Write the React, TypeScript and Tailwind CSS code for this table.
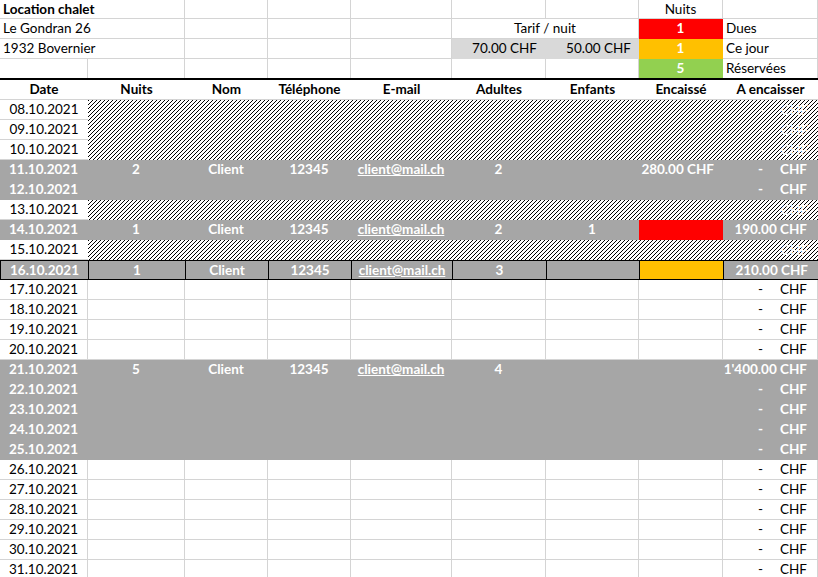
import React from "react";

type Kind = "hatch" | "gray" | "white";

interface DayRow {
  d: string;
  kind: Kind;
  booking?: { n: string; a: string; e?: string };
  enc?: string;
  pay?: string;
  boxed?: boolean;
}

const W = ["w-[88px]", "w-[97px]", "w-[83px]", "w-[83px]", "w-[101px]", "w-[94px]", "w-[93px]", "w-[84px]", "w-[95px]"];

const days: DayRow[] = [
  { d: "08.10.2021", kind: "hatch" },
  { d: "09.10.2021", kind: "hatch" },
  { d: "10.10.2021", kind: "hatch" },
  { d: "11.10.2021", kind: "gray", booking: { n: "2", a: "2" }, enc: "280.00", pay: "-" },
  { d: "12.10.2021", kind: "gray", pay: "-" },
  { d: "13.10.2021", kind: "hatch" },
  { d: "14.10.2021", kind: "gray", booking: { n: "1", a: "2", e: "1" }, enc: "red", pay: "190.00" },
  { d: "15.10.2021", kind: "hatch" },
  { d: "16.10.2021", kind: "gray", booking: { n: "1", a: "3" }, enc: "orange", pay: "210.00", boxed: true },
  { d: "17.10.2021", kind: "white", pay: "-" },
  { d: "18.10.2021", kind: "white", pay: "-" },
  { d: "19.10.2021", kind: "white", pay: "-" },
  { d: "20.10.2021", kind: "white", pay: "-" },
  { d: "21.10.2021", kind: "gray", booking: { n: "5", a: "4" }, enc: "green", pay: "1'400.00" },
  { d: "22.10.2021", kind: "gray", pay: "-" },
  { d: "23.10.2021", kind: "gray", pay: "-" },
  { d: "24.10.2021", kind: "gray", pay: "-" },
  { d: "25.10.2021", kind: "gray", pay: "-" },
  { d: "26.10.2021", kind: "white", pay: "-" },
  { d: "27.10.2021", kind: "white", pay: "-" },
  { d: "28.10.2021", kind: "white", pay: "-" },
  { d: "29.10.2021", kind: "white", pay: "-" },
  { d: "30.10.2021", kind: "white", pay: "-" },
  { d: "31.10.2021", kind: "white", pay: "-" },
];

const encColor: Record<string, string> = {
  red: "bg-[#ff0000]",
  orange: "bg-[#ffc000]",
  green: "bg-[#92d050]",
};

function Cell({ w, cls = "", children }: { w: string; cls?: string; children?: React.ReactNode }) {
  return (
    <div className={`${w} shrink-0 h-full box-border border-r border-b border-[#d4d4d4] flex items-center whitespace-nowrap ${cls}`}>
      {children}
    </div>
  );
}

function Amount({ v }: { v: string }) {
  if (v === "-") {
    return (
      <>
        <span>-</span>
        <span className="ml-[17px]">CHF</span>
      </>
    );
  }
  return <span>{v} CHF</span>;
}

function Day({ r }: { r: DayRow }) {
  if (r.kind === "hatch") {
    return (
      <div className="flex h-[20px]">
        <Cell w={W[0]} cls="justify-center border-r-0">{r.d}</Cell>
        <div className="w-[730px] h-full flex items-center justify-end pr-[10px] text-white bg-[repeating-linear-gradient(135deg,#000_0px,#000_0.9px,#fff_0.9px,#fff_2.83px)]">
          <Amount v="-" />
        </div>
      </div>
    );
  }

  const gray = r.kind === "gray";
  const fill = gray ? "bg-[#a6a6a6] border-transparent text-white font-bold" : "";
  const box = r.boxed ? "border-b-0 border-r-black" : "";
  const b = r.booking;
  const enc = r.enc && encColor[r.enc];

  return (
    <div className={`flex h-[20px] box-border ${r.boxed ? "border-y border-l border-black" : ""}`}>
      <Cell w={W[0]} cls={`justify-center ${fill} ${box}`}>{r.d}</Cell>
      <Cell w={W[1]} cls={`justify-center ${fill} ${box}`}>{b?.n}</Cell>
      <Cell w={W[2]} cls={`justify-center ${fill} ${box}`}>{b && "Client"}</Cell>
      <Cell w={W[3]} cls={`justify-center ${fill} ${box}`}>{b && "12345"}</Cell>
      <Cell w={W[4]} cls={`justify-center ${fill} ${box}`}>
        {b && <span className="underline">client@mail.ch</span>}
      </Cell>
      <Cell w={W[5]} cls={`justify-center ${fill} ${box}`}>{b?.a}</Cell>
      <Cell w={W[6]} cls={`justify-center ${fill} ${box}`}>{b?.e}</Cell>
      <Cell w={W[7]} cls={`justify-end pr-[8px] ${fill} ${box} ${enc || ""}`}>
        {r.enc && !enc && <Amount v={r.enc} />}
      </Cell>
      <Cell w={W[8]} cls={`justify-end pr-[10px] ${fill} ${box}`}>{r.pay && <Amount v={r.pay} />}</Cell>
    </div>
  );
}

export default function App() {
  return (
    <div className="w-[818px] h-[577px] overflow-hidden bg-white text-black text-[13.5px] font-[family-name:Lato,sans-serif]">
      {/* en-tête */}
      <div className="flex h-[19px]">
        <Cell w="w-[185px]" cls="pl-[3px] font-bold">Location chalet</Cell>
        <Cell w={W[2]} />
        <Cell w={W[3]} />
        <Cell w={W[4]} />
        <Cell w={W[5]} />
        <Cell w={W[6]} />
        <Cell w={W[7]} cls="justify-center">Nuits</Cell>
        <Cell w={W[8]} />
      </div>
      <div className="flex h-[20px]">
        <Cell w="w-[185px]" cls="pl-[3px]">Le Gondran 26</Cell>
        <Cell w={W[2]} />
        <Cell w={W[3]} />
        <Cell w={W[4]} />
        <Cell w="w-[187px]" cls="justify-center">Tarif / nuit</Cell>
        <Cell w={W[7]} cls="justify-center bg-[#ff0000] border-transparent text-white font-bold">1</Cell>
        <Cell w={W[8]} cls="pl-[3px]">Dues</Cell>
      </div>
      <div className="flex h-[20px]">
        <Cell w="w-[185px]" cls="pl-[3px]">1932 Bovernier</Cell>
        <Cell w={W[2]} />
        <Cell w={W[3]} />
        <Cell w={W[4]} />
        <Cell w={W[5]} cls="justify-end pr-[8px] bg-[#d9d9d9] border-transparent">70.00 CHF</Cell>
        <Cell w={W[6]} cls="justify-end pr-[7px] bg-[#d9d9d9] border-transparent">50.00 CHF</Cell>
        <Cell w={W[7]} cls="justify-center bg-[#ffc000] border-transparent text-white font-bold">1</Cell>
        <Cell w={W[8]} cls="pl-[3px]">Ce jour</Cell>
      </div>
      <div className="flex h-[19px]">
        <Cell w={W[0]} cls="border-b-0" />
        <Cell w={W[1]} cls="border-b-0" />
        <Cell w={W[2]} cls="border-b-0" />
        <Cell w={W[3]} cls="border-b-0" />
        <Cell w={W[4]} cls="border-b-0" />
        <Cell w={W[5]} cls="border-b-0" />
        <Cell w={W[6]} cls="border-b-0" />
        <Cell w={W[7]} cls="justify-center bg-[#92d050] border-transparent text-white font-bold">5</Cell>
        <Cell w={W[8]} cls="pl-[3px] border-b-0">Réservées</Cell>
      </div>

      {/* colonnes */}
      <div className="flex h-[22px] box-border border-t-2 border-black font-bold">
        {["Date", "Nuits", "Nom", "Téléphone", "E-mail", "Adultes", "Enfants", "Encaissé", "A encaisser"].map((t, i) => (
          <Cell key={t} w={W[i]} cls="justify-center border-r-0">{t}</Cell>
        ))}
      </div>

      {days.map((r) => (
        <Day key={r.d} r={r} />
      ))}
    </div>
  );
}
